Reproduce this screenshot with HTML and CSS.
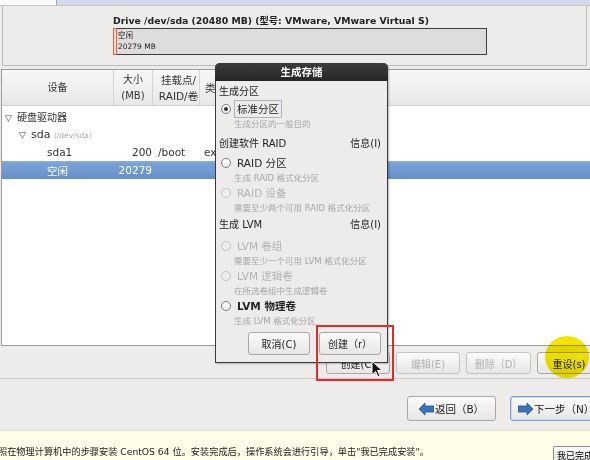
FILE: index.html
```html
<!DOCTYPE html>
<html lang="zh">
<head>
<meta charset="utf-8">
<link rel="stylesheet" href="styles.css">
</head>
<body>
<div class="screen">
  <div class="top-strip"><div class="ts-left"></div><div class="ts-right"></div></div>

  <section class="drive">
    <div class="drive-title">Drive /dev/sda (20480 MB) (型号: VMware, VMware Virtual S)</div>
    <div class="drive-bar">
      <div class="seg-used"></div>
      <div class="seg-free"><span>空闲</span><span>20279 MB</span></div>
    </div>
  </section>

  <section class="table">
    <div class="thead">
      <div class="th c1">设备</div>
      <div class="th c2">大小<br>(MB)</div>
      <div class="th c3">挂载点/<br>RAID/卷</div>
      <div class="th c4">类</div>
    </div>
    <div class="row">
      <div class="cell c1 lvl0"><span class="tri">▽</span>硬盘驱动器</div>
    </div>
    <div class="row">
      <div class="cell c1 lvl1"><span class="tri">▽</span>sda <span class="dev">(/dev/sda)</span></div>
    </div>
    <div class="row">
      <div class="cell c1 lvl2">sda1</div>
      <div class="cell c2 num">200</div>
      <div class="cell c3">/boot</div>
      <div class="cell c4">ext4</div>
    </div>
    <div class="row selected">
      <div class="cell c1 lvl2">空闲</div>
      <div class="cell c2 num">20279</div>
      <div class="cell c3"></div>
      <div class="cell c4"></div>
    </div>
  </section>

  <div class="actions">
    <button class="btn w63">创建(C)</button>
    <button class="btn w63 disabled">编辑(E)</button>
    <button class="btn w64 disabled">删除（D）</button>
    <button class="btn w63">重设(s)</button>
  </div>

  <div class="nav">
    <button class="btn navbtn back"><svg width="15" height="12" viewBox="0 0 15 12"><polygon points="0,6 6,0 6,3 15,3 15,9 6,9 6,12" fill="#3b74bd" stroke="#24508e" stroke-width="0.8"/></svg>返回（B）</button>
    <button class="btn navbtn next"><svg width="15" height="12" viewBox="0 0 15 12"><polygon points="15,6 9,0 9,3 0,3 0,9 9,9 9,12" fill="#3b74bd" stroke="#24508e" stroke-width="0.8"/></svg>下一步（N）</button>
  </div>

  <footer class="bottom">
    <span class="bottom-text">照在物理计算机中的步骤安装 CentOS 64 位。安装完成后，操作系统会进行引导，单击"我已完成安装"。</span>
    <button class="done">我已完成</button>
  </footer>

  <div class="dialog">
    <div class="dlg-title">生成存储</div>
    <div class="dlg-body">
      <div class="sect s1">生成分区</div>
      <div class="opt"><span class="radio on"></span><span class="lbl focus">标准分区</span></div>
      <div class="desc">生成分区的一般目的</div>
      <div class="sect s2"><span>创建软件 RAID</span><span>信息(I)</span></div>
      <div class="opt o2"><span class="radio"></span><span class="lbl">RAID 分区</span></div>
      <div class="desc">生成 RAID 格式化分区</div>
      <div class="opt dis"><span class="radio"></span><span class="lbl">RAID 设备</span></div>
      <div class="desc">需要至少两个可用 RAID 格式化分区</div>
      <div class="sect s3"><span>生成 LVM</span><span>信息(I)</span></div>
      <div class="opt dis o3"><span class="radio"></span><span class="lbl">LVM 卷组</span></div>
      <div class="desc">需要至少一个可用 LVM 格式化分区</div>
      <div class="opt dis"><span class="radio"></span><span class="lbl">LVM 逻辑卷</span></div>
      <div class="desc">在所选卷组中生成逻辑卷</div>
      <div class="opt"><span class="radio"></span><span class="lbl strong">LVM 物理卷</span></div>
      <div class="desc">生成 LVM 格式化分区</div>
      <div class="dlg-buttons">
        <button class="btn dbtn cancel">取消(C)</button>
        <button class="btn dbtn create">创建（r）</button>
      </div>
    </div>
  </div>

  <div class="red-box"></div>
  <div class="highlight"></div>
  <svg class="cursor" width="12" height="18" viewBox="0 0 12 18"><polygon points="1,1 1,15 4.5,11.5 7,17 9,16 6.5,10.5 11,10.5" fill="#111" stroke="#fff" stroke-width="1"/></svg>
</div>
</body>
</html>
```

FILE: styles.css
```css
* { box-sizing: border-box; }
html, body { margin: 0; padding: 0; }
body {
  width: 590px;
  height: 460px;
  overflow: hidden;
  background: #edeceb;
  font-family: "DejaVu Sans", "Noto Sans CJK SC", sans-serif;
  font-size: 10px;
  color: #2e3436;
}
.screen { position: relative; width: 590px; height: 460px; overflow: hidden; }

.top-strip { display: flex; height: 6px; border-bottom: 1px solid #c4c4c4; }
.ts-left { width: 57px; background: #fafafa; border-right: 1px solid #9aa6b8; }
.ts-right { flex: 1; background: #d3dbea; }

.drive {
  margin: 0 3px 0 2px;
  height: 60px;
  border: 1px solid #bdbcbb;
  border-top: none;
  padding: 9px 0 0 110px;
}
.drive-title { font-weight: bold; font-size: 9.3px; line-height: 12px; color: #222; white-space: nowrap; }
.drive-bar {
  margin-top: 1px;
  width: 374px;
  height: 27px;
  border: 1px solid #3c3c3c;
  background: #dedddc;
  display: flex;
}
.seg-used { width: 4px; border: 1px solid #e0603a; background: #f7d8cc; margin: -1px 0 -1px -1px; }
.seg-free { display: flex; flex-direction: column; font-size: 7.5px; line-height: 11px; padding: 1px 0 0 1px; color: #222; }

.table {
  margin: 3px 0 0 1px;
  height: 277px;
  border: 1px solid #9c9b9a;
  border-right: none;
  background: #fff;
}
.thead {
  display: grid;
  grid-template-columns: 112px 39px 47px 1fr;
  height: 36px;
  background: linear-gradient(#f8f7f6, #e9e8e6);
  border-bottom: 1px solid #cfcecc;
}
.th {
  display: flex;
  align-items: center;
  justify-content: center;
  text-align: center;
  line-height: 16px;
  font-size: 10px;
  color: #333;
  border-right: 1px solid #d6d5d3;
}
.th.c4 { justify-content: flex-start; padding-left: 5px; border-right: none; }
.row {
  display: grid;
  grid-template-columns: 112px 39px 47px 1fr;
  height: 18px;
  align-items: center;
  color: #333;
  font-size: 10px;
}
.row:nth-of-type(2) { margin-top: 1px; }
.cell { white-space: nowrap; overflow: hidden; }
.lvl0 { padding-left: 3px; }
.lvl1 { padding-left: 17px; font-size: 11px; }
.lvl2 { padding-left: 45px; font-size: 10.5px; }
.tri { font-size: 9px; margin-right: 5px; color: #444; }
.dev { font-size: 7.5px; color: #aaa; }
.num { text-align: right; padding-right: 1px; font-size: 10.5px; }
.c3 { padding-left: 5px; font-size: 10.5px; }
.c4 { padding-left: 4px; font-size: 10.5px; }
.row.selected {
  background: linear-gradient(#86ade0 0, #86ade0 1px, #79a2d6 2px, #6590cb 100%);
  color: #fff;
}

.actions {
  display: flex;
  gap: 6px;
  padding: 6px 0 0 326px;
  height: 33px;
  border-bottom: 1px solid #c9c8c6;
}
.btn {
  font-family: "DejaVu Sans", "Noto Sans CJK SC", sans-serif;
  font-size: 10px;
  color: #222;
  background: linear-gradient(#fbfbfa, #e7e6e4);
  border: 1px solid #a9a8a6;
  border-radius: 3px;
  padding: 0;
  height: 22px;
}
.w63 { width: 64px; flex: none; }
.w64 { width: 65px; flex: none; }
.btn.disabled { color: #b2b1b0; border-color: #c6c5c3; }

.nav {
  display: flex;
  gap: 14px;
  padding: 17px 0 0 407px;
  height: 52px;
  border-bottom: 1px solid #e2e1d6;
}
.navbtn {
  height: 25px;
  display: flex;
  align-items: center;
  justify-content: center;
  gap: 1px;
  flex: none;
  font-size: 10.5px;
}
.back { width: 89px; }
.next { width: 90px; border-color: #7d9fcf; box-shadow: inset 0 0 0 1px #c9d9ee; justify-content: flex-start; padding-left: 7px; }

.bottom {
  height: 29px;
  background: #fdfde8;
  display: flex;
  align-items: flex-end;
  justify-content: space-between;
  padding-bottom: 2px;
}
.bottom-text { font-size: 9.2px; color: #222; white-space: nowrap; margin-left: -2px; line-height: 12px; }
.done {
  font-family: "DejaVu Sans", "Noto Sans CJK SC", sans-serif;
  font-size: 9px;
  height: 18px;
  margin-bottom: -6px;
  padding: 0 0 0 3px;
  width: 37px;
  text-align: left;
  overflow: hidden;
  white-space: nowrap;
  background: linear-gradient(#fcfcfb, #e9e8e6);
  border: 1px solid #8f8e8c;
  border-right: none;
  border-radius: 2px 0 0 2px;
  flex: none;
}

.dialog {
  position: absolute;
  left: 215px;
  top: 63px;
  width: 173px;
  height: 300px;
  background: #edeceb;
  border: 1px solid #3a3a3a;
  border-top: none;
  border-radius: 5px 5px 0 0;
  box-shadow: 1px 1px 2px rgba(0,0,0,0.25);
}
.dlg-title {
  height: 18px;
  margin: 0 -1px;
  background: linear-gradient(#3c3c3c, #262626);
  border-radius: 5px 5px 0 0;
  color: #fff;
  font-weight: bold;
  font-size: 10.5px;
  text-align: center;
  line-height: 18px;
}
.dlg-body { padding: 3px 6px 0 3px; }
.sect {
  height: 16px;
  line-height: 16px;
  font-size: 10px;
  color: #222;
  display: flex;
  justify-content: space-between;
}
.s2 { margin-top: 6px; }
.s3 { margin-top: 3px; }
.opt { height: 18px; display: flex; align-items: center; font-size: 10.5px; color: #222; }
.o2 { margin-top: 2px; }
.o3 { margin-top: 4px; }
.radio {
  width: 10px; height: 10px;
  border: 1px solid #7e7d7b;
  border-radius: 50%;
  background: linear-gradient(#fff, #e9e9e9);
  margin: 0 4px 0 2px;
  position: relative;
  flex: none;
}
.radio.on::after {
  content: "";
  position: absolute;
  left: 2px; top: 2px;
  width: 4px; height: 4px;
  border-radius: 50%;
  background: #333;
}
.lbl { padding: 1px 2px; line-height: 14px; }
.lbl.focus { border: 1px solid #a8b4c6; margin-left: -1px; padding: 1px 2px; }
.lbl.strong { font-weight: 600; }
.opt.dis { color: #b4b3b2; }
.opt.dis .radio { border-color: #c4c3c1; background: #efeeed; }
.desc { height: 12px; line-height: 12px; font-size: 8.5px; color: #a6a5a4; padding-left: 15px; white-space: nowrap; }
.dlg-buttons { display: flex; gap: 9px; margin-top: 5px; padding-left: 29px; }
.dbtn { height: 23px; width: 63px; font-size: 10px; }

.red-box {
  position: absolute;
  left: 316px;
  top: 325px;
  width: 78px;
  height: 56px;
  border: 2px solid #e42a2a;
}
.highlight {
  position: absolute;
  left: 545px;
  top: 336px;
  width: 44px;
  height: 42px;
  border-radius: 50%;
  background: #f2e500;
  mix-blend-mode: multiply;
}
.cursor { position: absolute; left: 371px; top: 360px; }
```
